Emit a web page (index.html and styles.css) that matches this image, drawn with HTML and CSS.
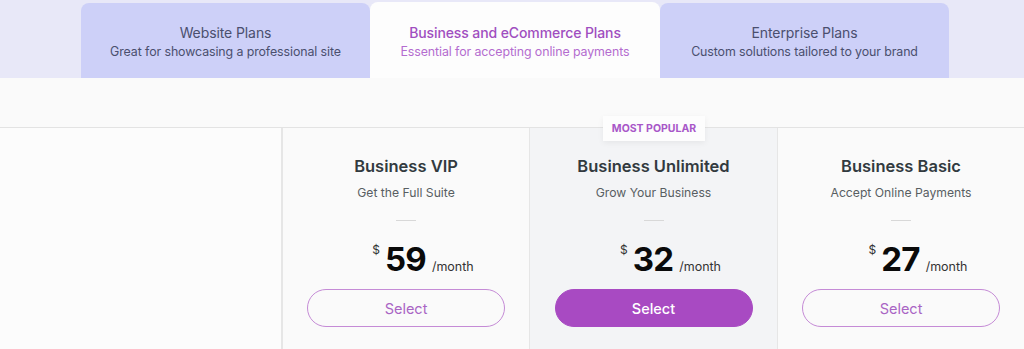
FILE: index.html
```html
<!DOCTYPE html>
<html lang="en">
<head>
<meta charset="utf-8">
<title>Plans</title>
<link rel="stylesheet" href="styles.css">
</head>
<body>
<div class="band">
  <div class="tabs">
    <div class="tab">
      <div class="tab-title">Website Plans</div>
      <div class="tab-sub">Great for showcasing a professional site</div>
    </div>
    <div class="tab active">
      <div class="tab-title">Business and eCommerce Plans</div>
      <div class="tab-sub">Essential for accepting online payments</div>
    </div>
    <div class="tab">
      <div class="tab-title">Enterprise Plans</div>
      <div class="tab-sub">Custom solutions tailored to your brand</div>
    </div>
  </div>
</div>
<div class="spacer"></div>
<div class="table">
  <div class="col empty"></div>
  <div class="col plan">
    <div class="plan-name">Business VIP</div>
    <div class="plan-sub">Get the Full Suite</div>
    <div class="dash"></div>
    <div class="price"><span class="cur">$</span><span class="amt">59</span><span class="per">/month</span></div>
    <button class="btn">Select</button>
  </div>
  <div class="col plan popular">
    <div class="badge">MOST POPULAR</div>
    <div class="plan-name">Business Unlimited</div>
    <div class="plan-sub">Grow Your Business</div>
    <div class="dash"></div>
    <div class="price"><span class="cur">$</span><span class="amt">32</span><span class="per">/month</span></div>
    <button class="btn filled">Select</button>
  </div>
  <div class="col plan">
    <div class="plan-name">Business Basic</div>
    <div class="plan-sub">Accept Online Payments</div>
    <div class="dash"></div>
    <div class="price"><span class="cur">$</span><span class="amt">27</span><span class="per">/month</span></div>
    <button class="btn">Select</button>
  </div>
</div>
</body>
</html>
```
FILE: styles.css
```css
* { box-sizing: border-box; }
html, body { margin: 0; padding: 0; }
body {
  width: 1024px;
  height: 349px;
  overflow: hidden;
  background: #fafafa;
  font-family: "Inter", "Liberation Sans", sans-serif;
  color: #333d42;
}
.band {
  height: 78px;
  background: #e8e8f8;
  padding: 3px 0 0 81px;
}
.tabs {
  display: flex;
  height: 75px;
}
.tab {
  width: 289px;
  background: #cdd0f8;
  border-radius: 8px 8px 0 0;
  display: flex;
  flex-direction: column;
  align-items: center;
  padding-top: 21px;
  color: #4a4f6e;
}
.tab.active {
  background: #fdfdfd;
  width: 290px;
  margin-top: -1px;
  padding-top: 22px;
  color: #a04ec0;
}
.tab-title {
  font-size: 14px;
  line-height: 18px;
  letter-spacing: -0.1px;
}
.tab.active .tab-title { font-weight: 500; }
.tab-sub {
  font-size: 12.4px;
  line-height: 19px;
  letter-spacing: -0.1px;
}
.tab.active .tab-sub { color: #b46ccf; }
.spacer { height: 49px; }
.table {
  display: grid;
  grid-template-columns: 283px 247px 248px 246px;
  border-top: 1px solid #e3e3e3;
  height: 222px;
}
.col {
  border-right: 1px solid #e6e6e6;
  position: relative;
}
.col.empty {
  background: #fcfcfc;
  border-right: 2px solid #e6e6e6;
}
.col:last-child { border-right: none; }
.plan {
  display: flex;
  flex-direction: column;
  align-items: center;
  padding-top: 27px;
}
.popular { background: #f3f4f6; }
.badge {
  position: absolute;
  top: -12px;
  left: 73px;
  width: 102px;
  height: 25px;
  background: #fdfdfd;
  color: #a857c8;
  font-size: 10.5px;
  font-weight: 700;
  display: flex;
  align-items: center;
  justify-content: center;
  box-shadow: 0 2px 6px rgba(0,0,0,0.06);
}
.plan-name {
  font-size: 16.5px;
  font-weight: 600;
  line-height: 22px;
  color: #323a3f;
}
.plan-sub {
  margin-top: 8px;
  font-size: 12.2px;
  line-height: 16px;
  color: #585e62;
}
.dash {
  margin-top: 19px;
  width: 20px;
  height: 1px;
  background: #d8d8d8;
}
.price {
  margin-top: 18px;
  margin-left: 34px;
  display: flex;
  align-items: baseline;
  height: 40px;
}
.cur {
  font-size: 12px;
  align-self: flex-start;
  margin-top: 3px;
  margin-right: 5px;
  color: #333;
}
.amt {
  font-size: 33px;
  font-weight: 700;
  color: #0a0a0a;
  letter-spacing: -0.8px;
}
.per {
  font-size: 12.5px;
  margin-left: 6px;
  color: #333;
}
.btn {
  margin-top: 10px;
  width: 198px;
  height: 38px;
  border-radius: 19px;
  border: 1px solid #c58bd6;
  background: transparent;
  color: #a965c4;
  font-family: inherit;
  font-size: 14.5px;
}
.btn.filled {
  background: #a84ac2;
  border-color: #a84ac2;
  color: #ffffff;
  font-weight: 500;
}
```
